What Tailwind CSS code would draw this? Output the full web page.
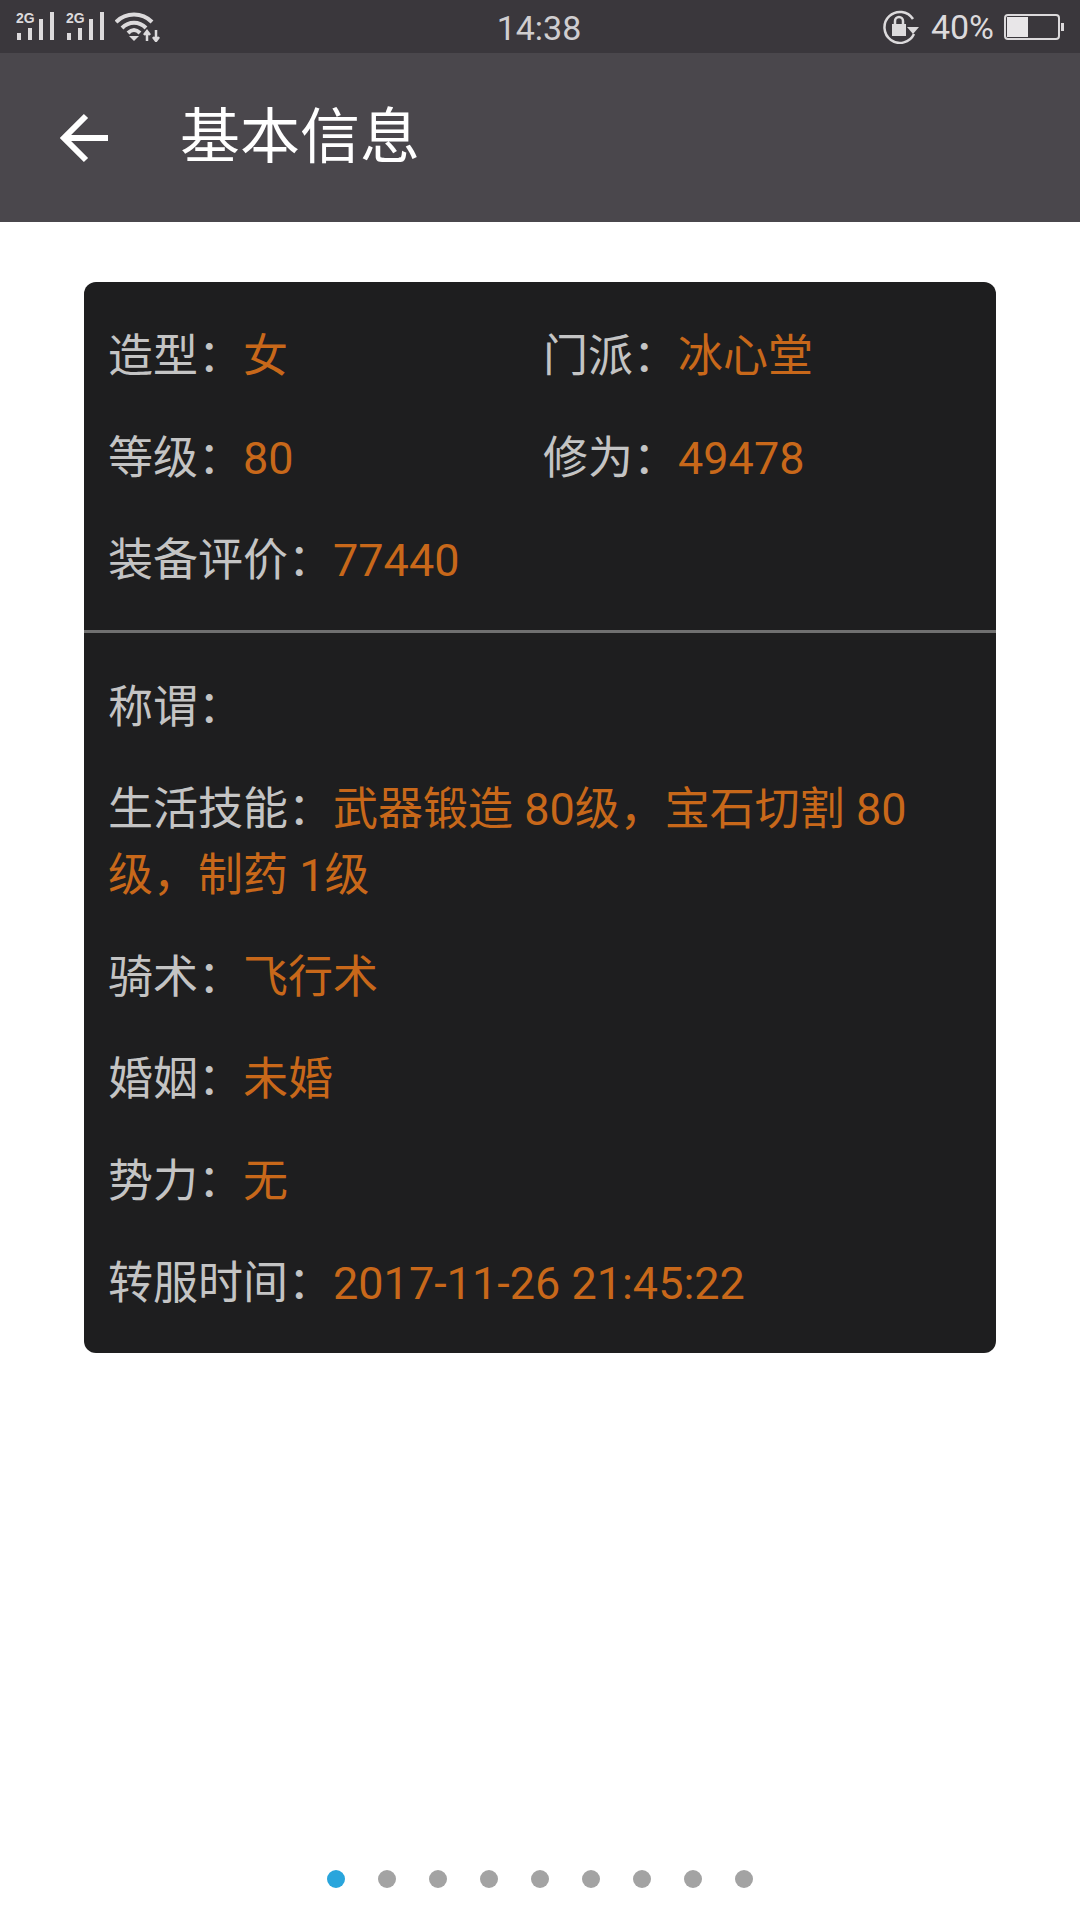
<!DOCTYPE html>
<html lang="zh">
<head>
  <meta charset="UTF-8">
  <title>基本信息</title>
  <script src="https://cdn.jsdelivr.net/npm/@tailwindcss/browser@4"></script>
</head>
<body class="bg-white font-['Roboto','Noto_Sans_CJK_SC',sans-serif]">
  <div class="w-[1080px] h-[1920px] relative overflow-hidden flex flex-col">

    <!-- status bar -->
    <div class="h-[53px] bg-[#3a373c] flex items-center justify-between pl-[16px] pr-[16px] relative text-[#dcdadc]">
      <div class="flex items-center gap-[10px]">
        <svg width="40" height="30" viewBox="0 0 40 30" fill="#dcdadc" class="overflow-visible">
          <text x="0" y="11" font-size="14" font-family="Liberation Sans" font-weight="700">2G</text>
          <rect x="1" y="21" width="4" height="7"/><rect x="12" y="16" width="4" height="12"/><rect x="23" y="7" width="4" height="21"/><rect x="34" y="0" width="4" height="28"/>
        </svg>
        <svg width="40" height="30" viewBox="0 0 40 30" fill="#dcdadc" class="overflow-visible">
          <text x="0" y="11" font-size="14" font-family="Liberation Sans" font-weight="700">2G</text>
          <rect x="1" y="21" width="4" height="7"/><rect x="12" y="16" width="4" height="12"/><rect x="23" y="7" width="4" height="21"/><rect x="34" y="0" width="4" height="28"/>
        </svg>
        <svg width="46" height="30" viewBox="0 0 46 30" fill="none" stroke="#dcdadc" stroke-width="4" class="-ml-[1px]">
          <path d="M1 10C11 0 27 0 37 10"/>
          <path d="M7 16C14 9 24 9 31 16"/>
          <path d="M13 21C17 17 21 17 25 21"/>
          <path d="M14 24h10l-5 5z" fill="#dcdadc" stroke="none"/>
          <path d="M32 29V20M29 23l3-4 3 4M41 18v10M38 25l3 4 3-4" stroke-width="2.500"/>
        </svg>
      </div>
      <span class="absolute left-0 right-[2px] top-[2px] text-center text-[34px] leading-[53px] text-[#d0ced0]">14:38</span>
      <div class="flex items-center">
        <svg width="38" height="34" viewBox="0 0 38 34" fill="none" stroke="#dcdadc" stroke-width="2.500" class="mr-[10px]">
          <path d="M31 24A15.500 15.500 0 1 1 30 9"/>
          <path d="M24 17h12l-6 7z" fill="#dcdadc" stroke="none"/>
          <rect x="9" y="14" width="14" height="12" fill="#dcdadc" stroke="none"/>
          <path d="M12 14v-3a4 4 0 0 1 8 0v3"/>
        </svg>
        <span class="text-[34px] leading-[53px] mr-[10px] pt-[1px]">40%</span>
        <svg width="60" height="26" viewBox="0 0 60 26">
          <rect x="1" y="1" width="54" height="24" rx="3" fill="none" stroke="#dcdadc" stroke-width="2"/>
          <rect x="3" y="3" width="21" height="20" fill="#e8e6e8"/>
          <rect x="57" y="9" width="3" height="8" fill="#dcdadc"/>
        </svg>
      </div>
    </div>

    <!-- header -->
    <div class="h-[169px] bg-[#4a474c] flex items-center pl-[60px]">
      <svg width="50" height="50" viewBox="0 0 50 50" fill="none" stroke="#fff" stroke-width="6" class="mt-[1px]">
        <path d="M48 25H4M26 3L4 25l22 22"/>
      </svg>
      <h1 class="ml-[70px] text-[60px] leading-none text-white">基本信息</h1>
    </div>

    <!-- card -->
    <div class="mt-[60px] mx-[84px] bg-[#1e1e1f] rounded-[12px] text-[45px] leading-[66px] text-[#c4c4c4]">
      <div class="px-[24px] pt-[42px] pb-[36px] border-b-[3px] border-[#707070]">
        <div class="grid grid-cols-[435px_1fr] gap-y-[36px]">
          <div>造型：<span class="text-[#c8681a]">女</span></div>
          <div>门派：<span class="text-[#c8681a]">冰心堂</span></div>
          <div>等级：<span class="text-[#c8681a]">80</span></div>
          <div>修为：<span class="text-[#c8681a]">49478</span></div>
          <div class="col-span-2">装备评价：<span class="text-[#c8681a]">77440</span></div>
        </div>
      </div>
      <div class="px-[24px] pt-[42px] pb-[36px] flex flex-col gap-[36px]">
        <div>称谓：</div>
        <div>生活技能：<span class="text-[#c8681a]">武器锻造 80级，宝石切割 80级，制药 1级</span></div>
        <div>骑术：<span class="text-[#c8681a]">飞行术</span></div>
        <div>婚姻：<span class="text-[#c8681a]">未婚</span></div>
        <div>势力：<span class="text-[#c8681a]">无</span></div>
        <div>转服时间：<span class="text-[#c8681a]">2017-11-26 21:45:22</span></div>
      </div>
    </div>

    <!-- pager dots -->
    <div class="absolute left-0 right-0 top-[1870px] flex justify-center gap-[33px]">
      <span class="w-[18px] h-[18px] rounded-full bg-[#29a5dc]"></span>
      <span class="w-[18px] h-[18px] rounded-full bg-[#a3a3a3]"></span>
      <span class="w-[18px] h-[18px] rounded-full bg-[#a3a3a3]"></span>
      <span class="w-[18px] h-[18px] rounded-full bg-[#a3a3a3]"></span>
      <span class="w-[18px] h-[18px] rounded-full bg-[#a3a3a3]"></span>
      <span class="w-[18px] h-[18px] rounded-full bg-[#a3a3a3]"></span>
      <span class="w-[18px] h-[18px] rounded-full bg-[#a3a3a3]"></span>
      <span class="w-[18px] h-[18px] rounded-full bg-[#a3a3a3]"></span>
      <span class="w-[18px] h-[18px] rounded-full bg-[#a3a3a3]"></span>
    </div>
  </div>
</body>
</html>
